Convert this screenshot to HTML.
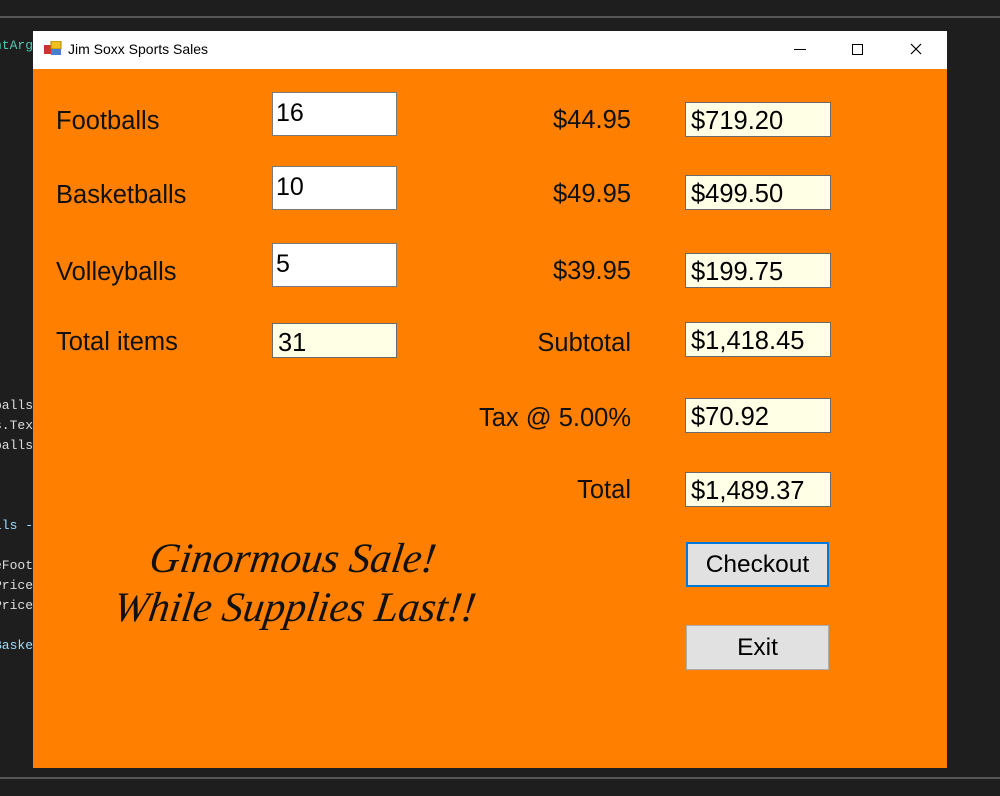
<!DOCTYPE html>
<html><head><style>
body{margin:0;width:1000px;height:796px;background:#1e1e1e;position:relative;overflow:hidden;font-family:"Liberation Sans",sans-serif}
.a{position:absolute}
.code{font-family:"Liberation Mono",monospace;font-size:13px;color:#dcdcdc;left:-6px}
.lbl{font-size:25.5px;color:#111}
.r{text-align:right;width:250px}
.in{background:#fff;border:1px solid #7a7a7a;box-sizing:border-box;font-size:25px;padding:6px 3px;color:#000}
.out{background:#ffffe6;border:1px solid #6a6a6a;box-sizing:border-box;font-size:25.5px;padding:2px 5px;color:#000;width:146px;height:35px;left:685px;line-height:32px}
.btn{background:#e1e1e1;border:1px solid #adadad;box-sizing:border-box;font-size:24.5px;text-align:center;left:686px;width:143px;height:45px;line-height:43px;color:#000}
.sale{font-family:"Liberation Serif",serif;font-style:italic;font-size:42px;color:#111;transform:skewX(-8deg)}
</style></head><body>
<div class="a" style="left:0;top:16px;width:1000px;height:2px;background:#555"></div>
<div class="a" style="left:0;top:777px;width:1000px;height:2px;background:#555"></div>
<div class="a code" style="top:38px;color:#4ec9b0">ntArg</div>
<div class="a code" style="top:398px">balls</div>
<div class="a code" style="top:418px">s.Tex</div>
<div class="a code" style="top:438px">balls</div>
<div class="a code" style="top:518px;color:#9cdcfe">lls -</div>
<div class="a code" style="top:558px">eFoot</div>
<div class="a code" style="top:578px">Price</div>
<div class="a code" style="top:598px">Price</div>
<div class="a code" style="top:638px;color:#9cdcfe">Baske</div>
<div class="a" style="left:33px;top:31px;width:914px;height:38px;background:#fff"></div>
<svg class="a" style="left:44px;top:41px" width="18" height="16"><rect x="0" y="4" width="7" height="9" fill="#c33"/><rect x="7" y="0" width="10" height="8" fill="#f0c020" stroke="#a80" stroke-width="1"/><rect x="7" y="8" width="10" height="6" fill="#4a7fd0"/></svg>
<div class="a" style="left:68px;top:41px;font-size:14px;color:#000">Jim Soxx Sports Sales</div>
<div class="a" style="left:794px;top:49px;width:12px;height:1px;background:#000"></div>
<div class="a" style="left:852px;top:44px;width:9px;height:9px;border:1px solid #000"></div>
<svg class="a" style="left:910px;top:43px" width="12" height="12"><path d="M1 1L11 11M11 1L1 11" stroke="#000" stroke-width="1.2"/></svg>
<div class="a" style="left:33px;top:69px;width:914px;height:699px;background:#ff8000"></div>
<div class="a lbl" style="left:56px;top:107px">Footballs</div>
<div class="a lbl" style="left:56px;top:181px">Basketballs</div>
<div class="a lbl" style="left:56px;top:258px">Volleyballs</div>
<div class="a lbl" style="left:56px;top:328px">Total items</div>
<div class="a in" style="left:272px;top:92px;width:125px;height:44px">16</div>
<div class="a in" style="left:272px;top:166px;width:125px;height:44px">10</div>
<div class="a in" style="left:272px;top:243px;width:125px;height:44px">5</div>
<div class="a out" style="left:272px;top:323px;width:125px;height:35px;padding-top:3px">31</div>
<div class="a lbl r" style="left:381px;top:106px">$44.95</div>
<div class="a lbl r" style="left:381px;top:180px">$49.95</div>
<div class="a lbl r" style="left:381px;top:257px">$39.95</div>
<div class="a lbl r" style="left:381px;top:329px">Subtotal</div>
<div class="a lbl r" style="left:381px;top:404px">Tax @ 5.00%</div>
<div class="a lbl r" style="left:381px;top:476px">Total</div>
<div class="a out" style="top:102px">$719.20</div>
<div class="a out" style="top:175px">$499.50</div>
<div class="a out" style="top:253px">$199.75</div>
<div class="a out" style="top:322px">$1,418.45</div>
<div class="a out" style="top:398px">$70.92</div>
<div class="a out" style="top:472px">$1,489.37</div>
<div class="a btn" style="top:542px;border:2px solid #0078d7;line-height:41px">Checkout</div>
<div class="a btn" style="top:625px">Exit</div>
<div class="a sale" style="left:150px;top:535px">Ginormous Sale!</div>
<div class="a sale" style="left:114px;top:584px">While Supplies Last!!</div>
</body></html>
